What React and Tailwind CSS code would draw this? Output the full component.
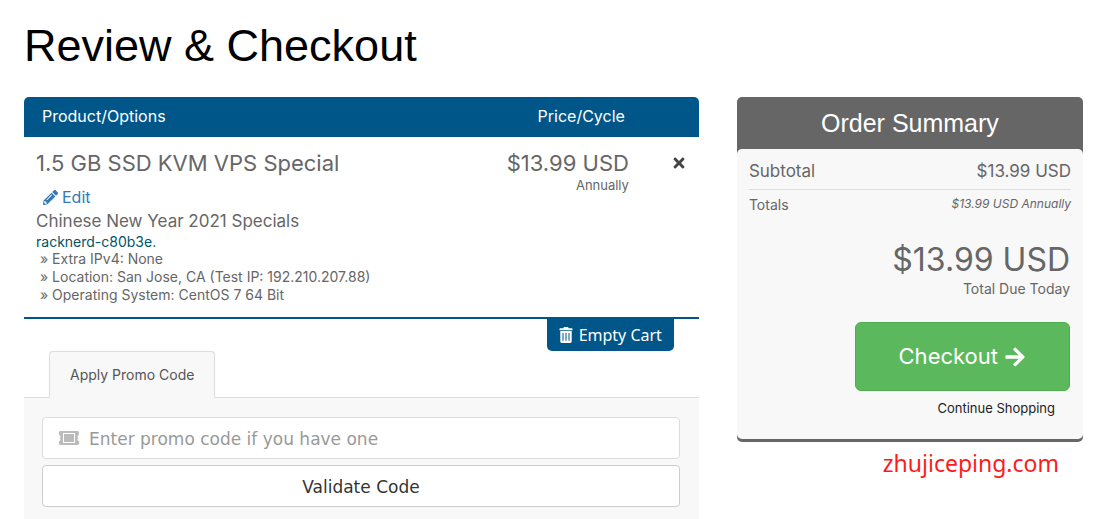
// src/App.jsx
import { useState } from 'react';
import { FaArrowRight, FaPencilAlt, FaTimes } from 'react-icons/fa';

const item = {
  name: '1.5 GB SSD KVM VPS Special',
  group: 'Chinese New Year 2021 Specials',
  hostname: 'racknerd-c80b3e.',
  price: '$13.99 USD',
  cycle: 'Annually',
  options: [
    'Extra IPv4: None',
    'Location: San Jose, CA (Test IP: 192.210.207.88)',
    'Operating System: CentOS 7 64 Bit',
  ],
};

function TrashIcon() {
  return (
    <svg viewBox="0 0 14 16" className="h-4 w-[14px]" fill="currentColor" aria-hidden="true">
      <path d="M4.5 1.2V.9c0-.5.3-.9.8-.9h3.4c.5 0 .8.4.8.9v.3h3.2c.5 0 .8.3.8.8v1.2H.5V2c0-.5.3-.8.8-.8z" />
      <path
        fillRule="evenodd"
        d="M1.3 4h11.4v10.6c0 .8-.5 1.4-1.3 1.4H2.6c-.8 0-1.3-.6-1.3-1.4zM3.5 6v7.8h1V6zm3 0v7.8h1V6zm3 0v7.8h1V6z"
      />
    </svg>
  );
}

function TicketIcon() {
  return (
    <svg viewBox="0 0 20 14" className="h-[14px] w-5" fill="currentColor" aria-hidden="true">
      <path
        fillRule="evenodd"
        d="M1.5 0H18.5Q20 0 20 1.4V4A1.5 1.5 0 0 0 20 7A1.5 1.5 0 0 0 20 10V12.6Q20 14 18.5 14H1.5Q0 14 0 12.6V10A1.5 1.5 0 0 0 0 7A1.5 1.5 0 0 0 0 4V1.4Q0 0 1.5 0ZM4 2V12H16V2Z"
      />
      <path d="M5 3h10v8H5z" />
    </svg>
  );
}

function CartTable() {
  return (
    <table className="w-full border-b-2 border-[#005689] text-left text-[#666666]">
      <thead>
        <tr className="h-10 bg-[#005689] text-base text-white">
          <th className="rounded-tl-[5px] pb-0.5 pl-[18px] font-normal">Product/Options</th>
          <th className="pr-1 pb-0.5 text-right font-normal">Price/Cycle</th>
          <th aria-label="Remove" className="w-[70px] rounded-tr-[5px]" />
        </tr>
      </thead>
      <tbody>
        <tr className="align-top">
          <td className="pt-[11px] pb-[13px] pl-3">
            <div className="text-[22px] leading-[30px]">{item.name}</div>
            <a href="#edit" className="mt-2 ml-[7px] flex w-fit items-center gap-1 text-base leading-[22px] text-[#337ab7]">
              <FaPencilAlt className="size-[15px]" />
              Edit
            </a>
            <div className="text-[17px] leading-[26px]">{item.group}</div>
            <div className="text-sm leading-[15px] text-[#005566]">{item.hostname}</div>
            <ul className="mt-px pl-1 text-sm leading-[18px]">
              {item.options.map((option) => (
                <li key={option}>» {option}</li>
              ))}
            </ul>
          </td>
          <td className="pt-[11px] text-right">
            <div className="text-[22px] leading-[30px]">{item.price}</div>
            <div className="text-[13px] leading-[14px]">{item.cycle}</div>
          </td>
          <td className="pt-[18px] pl-[30px]">
            <button type="button" aria-label="Remove" className="mx-auto block text-[#444444]">
              <FaTimes className="size-4" />
            </button>
          </td>
        </tr>
      </tbody>
    </table>
  );
}

function PromoCode() {
  const [code, setCode] = useState('');

  return (
    <div>
      <div className="flex border-b border-[#dddddd] pl-[25px]">
        <button
          type="button"
          className="-mb-px h-[47px] rounded-t border border-b-0 border-[#dddddd] bg-[#f8f8f8] px-5 text-sm text-[#555555]"
        >
          Apply Promo Code
        </button>
      </div>
      <form
        onSubmit={(e) => e.preventDefault()}
        className="flex flex-col gap-[6px] bg-[#f8f8f8] pt-[19px] pr-[19px] pb-3 pl-[18px] font-['DejaVu_Sans',sans-serif] text-[17px]"
      >
        <label className="flex h-[42px] items-center gap-[10px] rounded border border-[#dddddd] bg-white px-4 text-[#bbbbbb]">
          <TicketIcon />
          <input
            type="text"
            name="promo"
            aria-label="Promo code"
            value={code}
            onChange={(e) => setCode(e.target.value)}
            placeholder="Enter promo code if you have one"
            className="min-w-0 flex-1 pt-[3px] text-[#555555] outline-none placeholder:text-[#999999]"
          />
        </label>
        <button type="submit" className="h-[42px] rounded border border-[#cccccc] bg-white pt-[3px] text-[#333333]">
          Validate Code
        </button>
      </form>
    </div>
  );
}

function OrderSummary() {
  return (
    <aside>
      <div className="rounded-[5px] border-b-[3px] border-[#666666] bg-[#666666]">
        <h2 className="py-2 text-center font-['Liberation_Sans',Arial,sans-serif] text-[25px] leading-9 text-white">
          Order Summary
        </h2>
        <div className="rounded-[5px] bg-[#f8f8f8] px-3 pt-2 pb-[21px] text-[#666666]">
          <div className="flex justify-between border-b border-[#dddddd] pb-1 text-[17px] leading-7">
            <span>Subtotal</span>
            <span>{item.price}</span>
          </div>
          <div className="flex justify-between pt-1 text-sm leading-[22px]">
            <span>Totals</span>
            <span className="text-xs leading-5 italic">
              {item.price} {item.cycle}
            </span>
          </div>
          <div className="mt-6 pr-px text-right">
            <div className="text-[32px] leading-10">{item.price}</div>
            <div className="text-sm leading-[18px]">Total Due Today</div>
          </div>
          <div className="mt-6 flex flex-col items-end pr-px">
            <button
              type="button"
              className="flex h-[69px] items-center gap-[6px] rounded-md border border-[#4cae4c] bg-[#5cb85c] px-[43px] text-[22px] text-white"
            >
              Checkout
              <FaArrowRight className="size-[22px]" />
            </button>
            <a href="#store" className="mt-[7px] mr-[15px] text-[13px] leading-5 text-[#222222]">
              Continue Shopping
            </a>
          </div>
        </div>
      </div>
      <p className="mt-px pr-6 text-right font-['Comic_Sans_MS','Noto_Sans',sans-serif] text-[23px] leading-10 text-[#ff1a1a]">
        zhujiceping.com
      </p>
    </aside>
  );
}

function App() {
  return (
    <main className="bg-white pt-[19px] pr-[15px] pl-6 font-[Inter,sans-serif]">
      <h1 className="mb-[25px] font-['Liberation_Sans',Arial,sans-serif] text-[45px] leading-[53px] text-black">
        Review &amp; Checkout
      </h1>
      <div className="grid grid-cols-[39fr_20fr] items-start gap-[38px]">
        <section>
          <CartTable />
          <div className="flex justify-end pr-[25px]">
            <button
              type="button"
              className="flex h-8 items-center gap-[6px] rounded-b-[5px] bg-[#005689] px-3 font-['Noto_Sans',sans-serif] text-base text-white"
            >
              <TrashIcon />
              Empty Cart
            </button>
          </div>
          <PromoCode />
        </section>
        <OrderSummary />
      </div>
    </main>
  );
}

export default App;
